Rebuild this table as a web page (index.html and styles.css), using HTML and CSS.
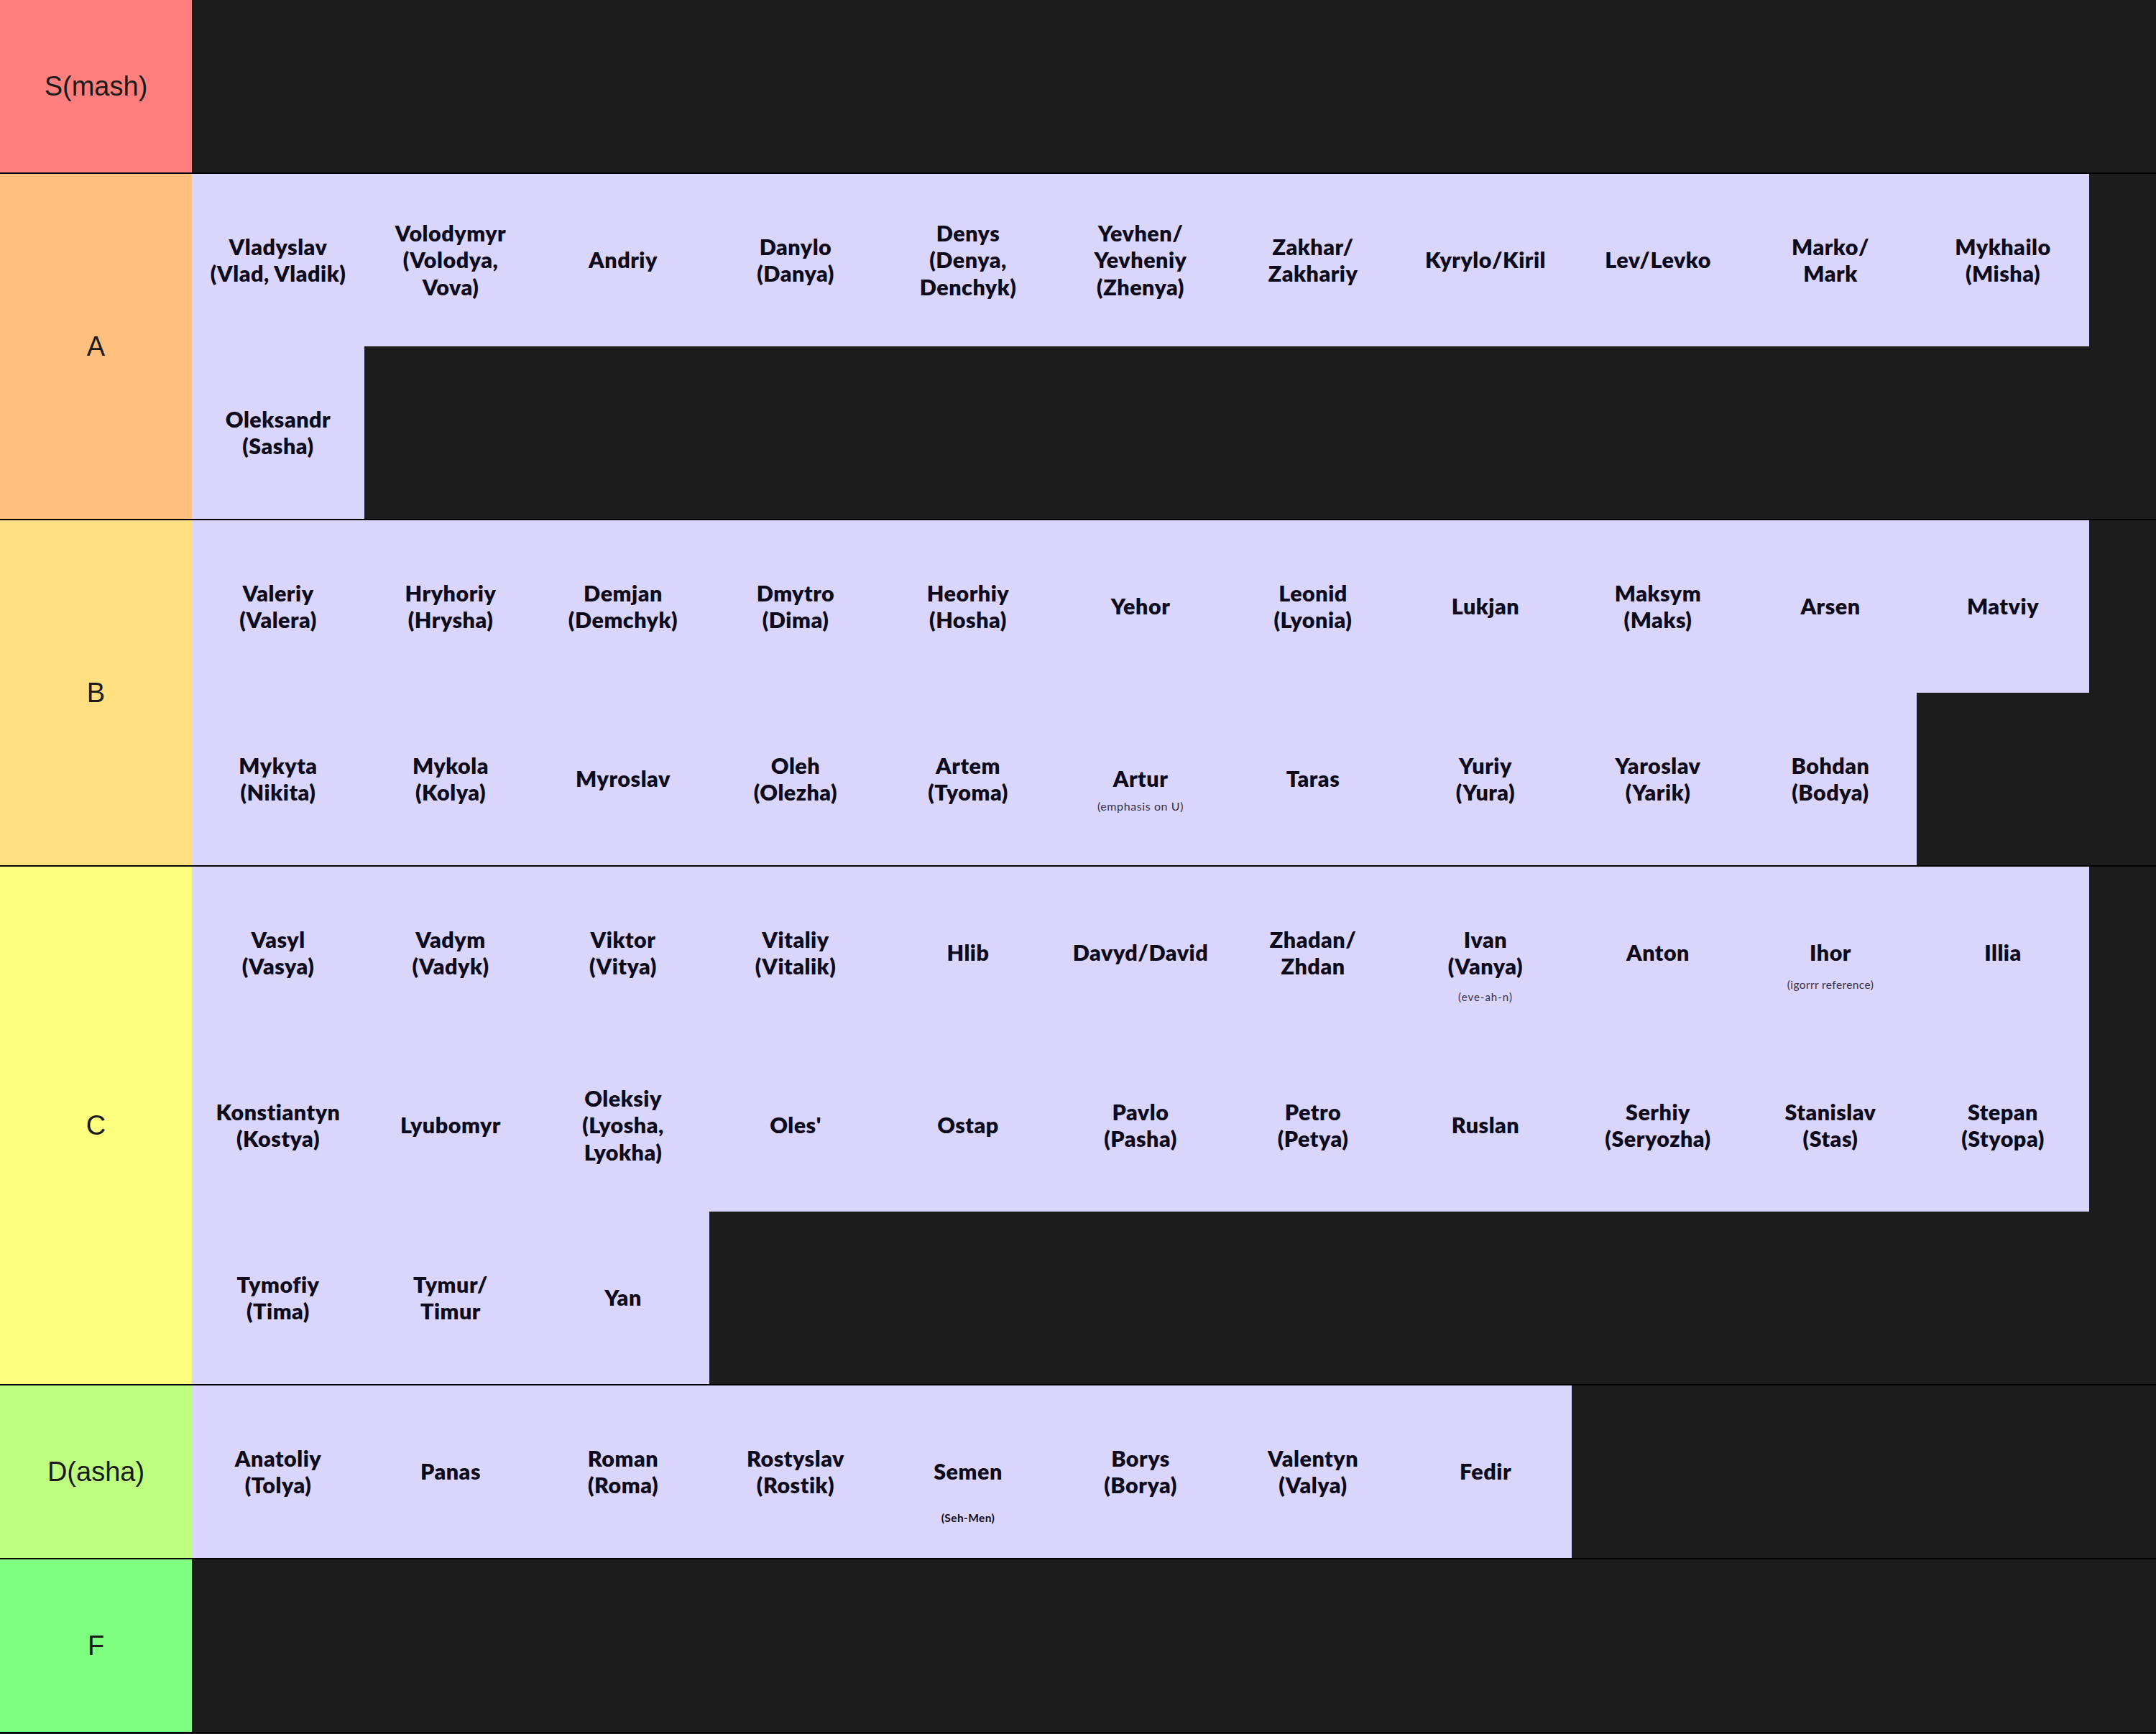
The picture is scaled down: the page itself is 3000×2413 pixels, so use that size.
FILE: index.html
```html
<!DOCTYPE html>
<html lang="en">
<head>
<meta charset="utf-8">
<title>Tier list</title>
<link rel="stylesheet" href="styles.css">
</head>
<body>
<div class="tierlist">
  <div class="tier">
    <div class="label label-s">S(mash)</div>
    <div class="items"></div>
  </div>

  <div class="tier">
    <div class="label label-a">A</div>
    <div class="items">
      <div class="item"><span class="name">Vladyslav<br>(Vlad, Vladik)</span></div>
      <div class="item"><span class="name">Volodymyr<br>(Volodya,<br>Vova)</span></div>
      <div class="item"><span class="name">Andriy</span></div>
      <div class="item"><span class="name">Danylo<br>(Danya)</span></div>
      <div class="item"><span class="name">Denys<br>(Denya,<br>Denchyk)</span></div>
      <div class="item"><span class="name">Yevhen/<br>Yevheniy<br>(Zhenya)</span></div>
      <div class="item"><span class="name">Zakhar/<br>Zakhariy</span></div>
      <div class="item"><span class="name">Kyrylo/Kiril</span></div>
      <div class="item"><span class="name">Lev/Levko</span></div>
      <div class="item"><span class="name">Marko/<br>Mark</span></div>
      <div class="item"><span class="name">Mykhailo<br>(Misha)</span></div>
      <div class="item"><span class="name">Oleksandr<br>(Sasha)</span></div>
    </div>
  </div>

  <div class="tier">
    <div class="label label-b">B</div>
    <div class="items">
      <div class="item"><span class="name">Valeriy<br>(Valera)</span></div>
      <div class="item"><span class="name">Hryhoriy<br>(Hrysha)</span></div>
      <div class="item"><span class="name">Demjan<br>(Demchyk)</span></div>
      <div class="item"><span class="name">Dmytro<br>(Dima)</span></div>
      <div class="item"><span class="name">Heorhiy<br>(Hosha)</span></div>
      <div class="item"><span class="name">Yehor</span></div>
      <div class="item"><span class="name">Leonid<br>(Lyonia)</span></div>
      <div class="item"><span class="name">Lukjan</span></div>
      <div class="item"><span class="name">Maksym<br>(Maks)</span></div>
      <div class="item"><span class="name">Arsen</span></div>
      <div class="item"><span class="name">Matviy</span></div>
      <div class="item"><span class="name">Mykyta<br>(Nikita)</span></div>
      <div class="item"><span class="name">Mykola<br>(Kolya)</span></div>
      <div class="item"><span class="name">Myroslav</span></div>
      <div class="item"><span class="name">Oleh<br>(Olezha)</span></div>
      <div class="item"><span class="name">Artem<br>(Tyoma)</span></div>
      <div class="item"><span class="name">Artur</span><span class="sub sub-artur">(emphasis on U)</span></div>
      <div class="item"><span class="name">Taras</span></div>
      <div class="item"><span class="name">Yuriy<br>(Yura)</span></div>
      <div class="item"><span class="name">Yaroslav<br>(Yarik)</span></div>
      <div class="item"><span class="name">Bohdan<br>(Bodya)</span></div>
    </div>
  </div>

  <div class="tier">
    <div class="label label-c">C</div>
    <div class="items">
      <div class="item"><span class="name">Vasyl<br>(Vasya)</span></div>
      <div class="item"><span class="name">Vadym<br>(Vadyk)</span></div>
      <div class="item"><span class="name">Viktor<br>(Vitya)</span></div>
      <div class="item"><span class="name">Vitaliy<br>(Vitalik)</span></div>
      <div class="item"><span class="name">Hlib</span></div>
      <div class="item"><span class="name">Davyd/David</span></div>
      <div class="item"><span class="name">Zhadan/<br>Zhdan</span></div>
      <div class="item"><span class="name">Ivan<br>(Vanya)</span><span class="sub sub-ivan">(eve-ah-n)</span></div>
      <div class="item"><span class="name">Anton</span></div>
      <div class="item"><span class="name">Ihor</span><span class="sub sub-ihor">(igorrr reference)</span></div>
      <div class="item"><span class="name">Illia</span></div>
      <div class="item"><span class="name">Konstiantyn<br>(Kostya)</span></div>
      <div class="item"><span class="name">Lyubomyr</span></div>
      <div class="item"><span class="name">Oleksiy<br>(Lyosha,<br>Lyokha)</span></div>
      <div class="item"><span class="name">Oles'</span></div>
      <div class="item"><span class="name">Ostap</span></div>
      <div class="item"><span class="name">Pavlo<br>(Pasha)</span></div>
      <div class="item"><span class="name">Petro<br>(Petya)</span></div>
      <div class="item"><span class="name">Ruslan</span></div>
      <div class="item"><span class="name">Serhiy<br>(Seryozha)</span></div>
      <div class="item"><span class="name">Stanislav<br>(Stas)</span></div>
      <div class="item"><span class="name">Stepan<br>(Styopa)</span></div>
      <div class="item"><span class="name">Tymofiy<br>(Tima)</span></div>
      <div class="item"><span class="name">Tymur/<br>Timur</span></div>
      <div class="item"><span class="name">Yan</span></div>
    </div>
  </div>

  <div class="tier">
    <div class="label label-d">D(asha)</div>
    <div class="items">
      <div class="item"><span class="name">Anatoliy<br>(Tolya)</span></div>
      <div class="item"><span class="name">Panas</span></div>
      <div class="item"><span class="name">Roman<br>(Roma)</span></div>
      <div class="item"><span class="name">Rostyslav<br>(Rostik)</span></div>
      <div class="item"><span class="name">Semen</span><span class="sub sub-semen">(Seh-Men)</span></div>
      <div class="item"><span class="name">Borys<br>(Borya)</span></div>
      <div class="item"><span class="name">Valentyn<br>(Valya)</span></div>
      <div class="item"><span class="name">Fedir</span></div>
    </div>
  </div>

  <div class="tier">
    <div class="label label-f">F</div>
    <div class="items"></div>
  </div>
</div>
</body>
</html>
```

FILE: styles.css
```css
html, body {
  margin: 0;
  padding: 0;
  background: #1c1c1c;
}

.tierlist {
  display: flex;
  flex-direction: column;
  width: 3000px;
}

.tier {
  display: flex;
  min-height: 240px;
  border-bottom: 2px solid #000;
}

.label {
  flex: 0 0 267px;
  display: flex;
  align-items: center;
  justify-content: center;
  font-family: "Liberation Sans", Arial, sans-serif;
  font-size: 38px;
  color: #1a1a17;
}

.label-s { background: #ff7f7f; }
.label-a { background: #ffbf7f; }
.label-b { background: #ffdf7f; }
.label-c { background: #ffff7f; }
.label-d { background: #bfff7f; }
.label-f { background: #7fff7f; }

.items {
  flex: 1 1 auto;
  display: flex;
  flex-wrap: wrap;
  align-content: flex-start;
  max-width: 2640px;
}

.item {
  width: 240px;
  height: 240px;
  background: #dad5fb;
  display: grid;
  grid-template-rows: 1fr auto 1fr;
  justify-items: center;
  text-align: center;
  font-family: "Lato", "Open Sans", sans-serif;
  color: #0d0a1c;
}

.name {
  grid-row: 2;
  font-weight: 800;
  font-size: 30.5px;
  line-height: 37.5px;
  letter-spacing: 0.5px;
  white-space: nowrap;
}

.sub {
  grid-row: 3;
  align-self: start;
  white-space: nowrap;
  color: #35304a;
  font-weight: 400;
}

.sub-artur {
  font-size: 16px;
  line-height: 20px;
  letter-spacing: 0.6px;
  margin-top: 9px;
}

.sub-ivan {
  font-size: 15px;
  line-height: 18px;
  letter-spacing: 1px;
  margin-top: 14px;
}

.sub-ihor {
  font-size: 15.5px;
  line-height: 18px;
  letter-spacing: 0.4px;
  margin-top: 16px;
}

.sub-semen {
  font-size: 15.5px;
  line-height: 18px;
  letter-spacing: 0.4px;
  margin-top: 36px;
  font-weight: 700;
  color: #0d0a1c;
}
```
